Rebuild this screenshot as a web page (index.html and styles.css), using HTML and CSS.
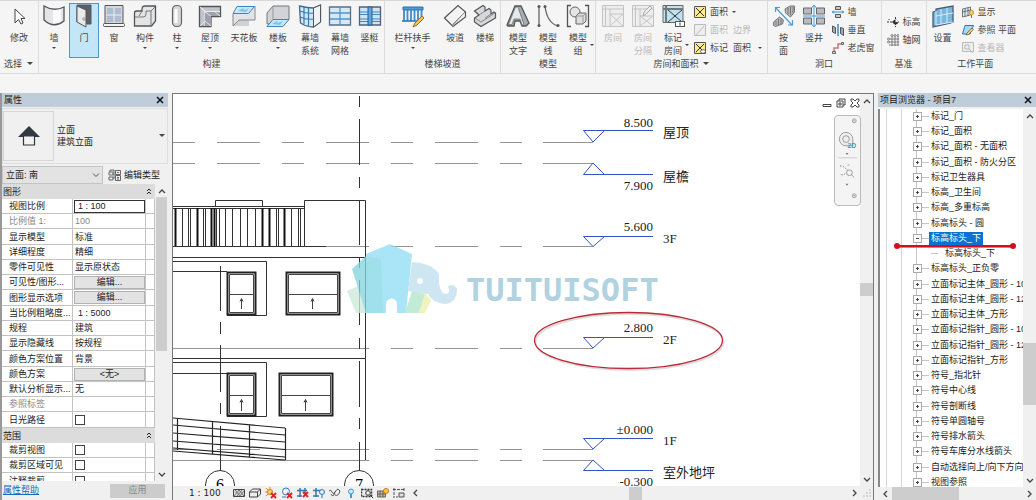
FILE: index.html
```html
<!DOCTYPE html>
<html lang="zh-CN">
<head>
<meta charset="utf-8">
<title>项目7</title>
<link rel="stylesheet" href="styles.css">
</head>
<body>
<div class="app">
<header class="ribbon">
  <section class="group">
    <div class="tools">
      <button class="tool w38"><svg class="ico" viewBox="0 0 24 24"><path d="M8 5v14l3.500-3.500 2.500 4.500 2-1-2-4.500h4z" fill="#fff" stroke="#444"/></svg>修改</button>
    </div>
    <button class="caption left">选择 <i class="down big"></i></button>
  </section>
  <section class="group">
    <div class="tools">
      <button class="tool w30"><svg class="ico" viewBox="0 0 24 24"><path d="M2 2q10 6 20 1v14q-10 8-20-1z" fill="#e4e5e8"/><path d="M11 5.500l8-1.500v14l-8 1.500z" fill="#fafafa"/><path d="M2 2q10 6 20 1v14q-10 8-20-1z" fill="none" stroke="#555" stroke-width="1.300"/></svg>墙<i class="down"></i></button>
      <button class="tool w30 active"><svg class="ico" viewBox="0 0 24 24"><path d="M5 18V1h14v19h-4" fill="#5c6066" stroke="#555"/><path d="M5 2l9 4v17l-9-5z" fill="#e9eaec" stroke="#555"/><circle cx="12" cy="15" r="1.200" fill="#fff" stroke="#555" stroke-width=".6"/></svg>门</button>
      <button class="tool w30"><svg class="ico" viewBox="0 0 24 24"><path d="M3 1.500h18v18H3z" fill="#d5d8dc" stroke="#555"/><path d="M5 4h14v14H5z" fill="#aebdcd"/><path d="M12 4v14M5 11h14" stroke="#eef2f6"/><rect x="1.500" y="19.500" width="21" height="3" rx="1" fill="#f5f5f5" stroke="#555"/></svg>窗</button>
      <button class="tool w32"><svg class="ico" viewBox="0 0 24 24"><path d="M1.500 12V9q0-2 2-2H9V5q0-3 3-3h10.500v15l-4 5h-17z" fill="#e2e4e6" stroke="#555" stroke-width="1.300"/><path d="M2 13h8q3 0 3-3V7h5v15M18 7l4-4M9 7L6 12" fill="none" stroke="#777"/></svg>构件<i class="down"></i></button>
      <button class="tool w32"><svg class="ico" viewBox="0 0 24 24"><rect x="7.500" y="1.500" width="9" height="21" rx="4" fill="#d4d6da" stroke="#666" stroke-width="1.200"/><path d="M11 5v14" stroke="#fff" stroke-width="3"/></svg>柱<i class="down"></i></button>
      <button class="tool w34"><svg class="ico" viewBox="0 0 24 24"><path d="M1.500 2.500h21v10H13v10H1.500z" fill="#c1c4cb" stroke="#555" stroke-width="1.300"/><path d="M2 3l5 4.500V22M2 3l5 4.500h15" fill="none" stroke="#eee"/><path d="M7 8h15v4h-9v10H7z" fill="#9ca1ab"/><path d="M7 8l6 4M2 22l5-5 6 5M17 8l5 4" fill="none" stroke="#e4e5e8"/></svg>屋顶<i class="down"></i></button>
      <button class="tool w34"><svg class="ico" viewBox="0 0 24 24"><path d="M1 10h6V2h16v12h-6v8H1z" fill="#ced1d5"/><path d="M1 10v12l6-6h16V2" fill="#e2e3e4" stroke="#888"/><path d="M5 2.500h17.500l-6 7H1z" fill="#c9e7f9" stroke="#3a86bd"/><path d="M6 7l5-3 1 2 5-2-3 4z" fill="#83c1e9"/></svg>天花板</button>
      <button class="tool w34"><svg class="ico" viewBox="0 0 24 24"><path d="M7 2h16v13l-6 5H1V9z" fill="#d1d3d8" stroke="#777"/><path d="M7 2v13" stroke="#999"/><path d="M7 15.500h16l-6 7H1z" fill="#c9e7f9" stroke="#3a86bd"/><path d="M6 20l5-3 1 2 5-2-3 4z" fill="#83c1e9"/></svg>楼板<i class="down"></i></button>
      <button class="tool w30"><svg class="ico" viewBox="0 0 24 24"><path d="M1.500 2q8 2 14 2l7-3v17l-7 5q-7 0-13-4z" fill="#d3e8f6" stroke="#46688a" stroke-width="1.300"/><path d="M15.500 4v19l7-5V1z" fill="#f1f2f4" stroke="#555"/><path d="M6 3v17M10.500 4v18M2 7q7 3 13.500 2M2 13q7 3 13.500 2" fill="none" stroke="#3978ad" stroke-width="1.200"/></svg>幕墙<br>系统</button>
      <button class="tool w30"><svg class="ico" viewBox="0 0 24 24"><path d="M1.500 3h21v18h-21z" fill="#d9e8f4" stroke="#5c6f82" stroke-width="1.300"/><path d="M2 9h20M2 15h20M12 3v18" stroke="#4d97ce" stroke-width="1.300"/></svg>幕墙<br>网格</button>
      <button class="tool w28"><svg class="ico" viewBox="0 0 24 24"><path d="M1.500 3h21v18h-21z" fill="#cfe4f4" stroke="#4b647c" stroke-width="1.300"/><path d="M2 8h20M2 10.500h20M2 15h20M2 17.500h20" stroke="#4787ba"/><path d="M10 3h4v18h-4z" fill="#5fa6dc" stroke="#275f91"/></svg>竖梃</button>
    </div>
    <div class="caption">构建</div>
  </section>
  <section class="group">
    <div class="tools">
      <button class="tool w56"><svg class="ico" viewBox="0 0 24 24"><path d="M2 3h20v3H2z" fill="#4f9bd6" stroke="#2b70aa"/><path d="M3 6v11M6.500 6v11M10 6v11M13.500 6v11M17 6v11M20.500 6v8" stroke="#3e8aca" stroke-width="1.800"/><path d="M1 17h18" stroke="#2b70aa" stroke-width="1.500"/><path d="M12 23l2-4 7-7 2 2-7 7z" fill="#f8c556" stroke="#9a6a20"/></svg>栏杆扶手<i class="down"></i></button>
      <button class="tool w30"><svg class="ico" viewBox="0 0 24 24"><path d="M1.500 14L15 1.500l7.500 6.500v5L10 22.500z" fill="#f3f3f4" stroke="#555" stroke-width="1.200"/><path d="M10 22.500V20L22 8" fill="#aaa" stroke="#888"/></svg>坡道</button>
      <button class="tool w30"><svg class="ico" viewBox="0 0 24 24"><path d="M1.500 7L10 1.500l2 1.500v4l4-2.500 2 1.500v4l3-2 1.500 1v5L8 22.500 1.500 18v-4L6 11z" fill="#d6d8dc" stroke="#555" stroke-width="1.200"/><path d="M6 11l6-4M2 14l6 4 14-9M12 14l6-4" fill="none" stroke="#888"/></svg>楼梯</button>
    </div>
    <div class="caption">楼梯坡道</div>
  </section>
  <section class="group pad">
    <div class="tools">
      <button class="tool w30"><svg class="ico" viewBox="0 0 24 24"><path d="M1 21L9 2h6l8 17-3 3h-4l-2-5H9l-1 5H2zM10 13h3l-2-6z" fill="#a6aab2" stroke="#555" stroke-width="1.300" fill-rule="evenodd"/><path d="M2.500 20.500L9.500 3H12l6 18h-2l-2-6H8l-2 5.500z" fill="#e6e7ea" stroke="#666" stroke-width=".7"/></svg>模型<br>文字</button>
      <button class="tool w30"><svg class="ico" viewBox="0 0 24 24"><path d="M3 2v20M9 2q2 17 13 20" fill="none" stroke="#666" stroke-width="1.300"/><g fill="#555"><circle cx="3" cy="2.500" r="1.500"/><circle cx="3" cy="21.500" r="1.500"/><circle cx="9" cy="2.500" r="1.500"/><circle cx="22" cy="21.500" r="1.500"/></g></svg>模型<br>线</button>
      <button class="tool w30 side"><svg class="ico" viewBox="0 0 24 24"><path d="M5 1.500H1.500v21H5M19 1.500h3.500v21H19" fill="none" stroke="#555" stroke-width="1.300"/><circle cx="9" cy="8" r="5" fill="#e4e5e8" stroke="#666"/><path d="M10 12l3-3h7v8l-3 3h-7z" fill="#ddd" stroke="#666"/><path d="M10 12h7l3-3M17 12v8" fill="none" stroke="#999"/></svg>模型<br>组<i class="down"></i></button>
    </div>
    <div class="caption">模型</div>
  </section>
  <section class="group pad">
    <div class="tools">
      <button class="tool w30 off"><svg class="ico" viewBox="0 0 24 24"><path d="M1.500 1.500h21v21h-21zM4.500 1.500v21M1.500 5h21M9 5v17M9 10h13M9 10l13 12M22 10L9 22" fill="#eee" stroke="#c4c4c4"/></svg>房间</button>
      <button class="tool w30 off"><svg class="ico" viewBox="0 0 24 24"><path d="M1.500 1.500h21v21h-21zM4.500 1.500v21M1.500 5h21M9 5v17M9 12h13M9 12l13 10M22 12L9 22" fill="#eee" stroke="#c4c4c4"/><path d="M12 12l1-4 6-6 2 2-6 6z" fill="#eee" stroke="#aaa"/></svg>房间<br>分隔</button>
      <button class="tool w30 side"><svg class="ico" viewBox="0 0 24 24"><path d="M2 1.500h20v17H2z" fill="#bfe2f3" stroke="#666"/><path d="M5 1.500v17M2 5h20" stroke="#777" stroke-width="2"/><path d="M7 6l14 12M21 6L7 18" stroke="#333"/><rect x="14.500" y="17.500" width="9" height="5" fill="#fff" stroke="#555"/><path d="M19 18.500v3" stroke="#333"/></svg>标记<br>房间<i class="down"></i></button>
      <div class="stack gap">
        <button class="mini"><svg viewBox="0 0 12 12"><path d="M.5.500h11v11H.5z" fill="#fbeb8a" stroke="#555"/><path d="M2 2l8 8M10 2l-8 8" stroke="#333"/></svg>面积<i class="down"></i></button>
        <button class="mini off"><svg viewBox="0 0 12 12"><path d="M.5.500h11v11H.5zM2 11l8-9" fill="#eee" stroke="#bbb"/></svg>面积&nbsp; 边界</button>
        <button class="mini"><svg viewBox="0 0 12 12"><path d="M.5.500h11v11H.5z" fill="#fbeb8a" stroke="#555"/><path d="M2 2l7 7M10 2l-8 8" stroke="#333"/><ellipse cx="9" cy="9.500" rx="2.500" ry="1.800" fill="#fff" stroke="#444" stroke-width=".7"/></svg>标记&nbsp; 面积&nbsp;<i class="down"></i></button>
      </div>
    </div>
    <button class="caption">房间和面积 <i class="down big"></i></button>
  </section>
  <section class="group">
    <div class="tools">
      <button class="tool w32"><svg class="ico" viewBox="0 0 24 24"><path d="M1.500 18l6-5 4 3-1 4-7 2.500-2-1zM13 5l5-3h4.500v6l-4 5-5-4z" fill="#b4b7bc" stroke="#777"/><path d="M4 17v4M6.500 15v6M9 15v5M16 4v6M18.500 3v8M21 3v6" stroke="#777"/><path d="M4 4l16 17M3.500 8V3.500H8M16 21h4.500v-5" fill="none" stroke="#4a9bd8" stroke-width="1.200"/></svg>按<br>面</button>
      <button class="tool w28"><svg class="ico" viewBox="0 0 24 24"><path d="M1.500 4h8v6h-8zM14.500 4h8v6h-8zM1.500 14h8v6h-8zM14.500 14h8v6h-8z" fill="#b8bbbf" stroke="#666"/><path d="M12 1v22M9.500 4L12 1l2.500 3M9.500 20l2.500 3 2.500-3M1 12h22" fill="none" stroke="#4a9bd8"/></svg>竖井</button>
      <div class="stack tight">
        <button class="mini"><svg viewBox="0 0 12 12"><path d="M3.500.500h5v3h-5zM3.500 8.500h5v3h-5z" fill="#ccc" stroke="#555"/><path d="M0 6h12M2 4.500L.5 6 2 7.500M10 4.500L11.500 6 10 7.500" fill="none" stroke="#398bc8"/></svg>墙</button>
        <button class="mini"><svg viewBox="0 0 12 12"><path d="M.5 2l3 1.500v6L.5 8zM8.500 3.500l3 1v7l-3-2z" fill="#aaa" stroke="#555"/><path d="M6 0v12" stroke="#398bc8" stroke-width="1.500"/></svg>垂直</button>
        <button class="mini"><svg viewBox="0 0 12 12"><path d="M2 10V6h4V2h5" fill="none" stroke="#c77970" stroke-width="1.500"/><path d="M.5 9.500h3v2h-3zM9.500.500h2v2h-2z" fill="#ddd" stroke="#666"/></svg>老虎窗</button>
      </div>
    </div>
    <div class="caption">洞口</div>
  </section>
  <section class="group">
    <div class="tools">
      <div class="stack datum">
        <button class="mini"><svg viewBox="0 0 12 12"><path d="M0 6h5M2 3v1M8.500 1v10M5 6h7" stroke="#333" stroke-dasharray="2 1"/><circle cx="8.500" cy="6" r="2.500" fill="#333"/><path d="M8.500 3.500A2.500 2.500 0 0 1 11 6H8.500z" fill="#fff"/></svg>标高</button>
        <button class="mini"><svg viewBox="0 0 12 12"><path d="M5 2v10M8 2v10M11 2v10M2 5h10M2 8h10M2 11h10" stroke="#666" stroke-width=".8"/><g fill="#fff" stroke="#555" stroke-width=".7"><circle cx="5" cy="1.500" r="1"/><circle cx="8" cy="1.500" r="1"/><circle cx="11" cy="1.500" r="1"/><circle cx="1.500" cy="5" r="1"/><circle cx="1.500" cy="8" r="1"/></g></svg>轴网</button>
      </div>
    </div>
    <div class="caption">基准</div>
  </section>
  <section class="group last">
    <div class="tools">
      <button class="tool w32"><svg class="ico" viewBox="0 0 24 24"><path d="M2 8l3-1V5l17-3v16l-3 1-17 4z" fill="#79b7df" stroke="#4a5d70" stroke-width="1.300"/><path d="M5 7v14l17-3M10 5v15M16 4v15M5 12l17-3" fill="none" stroke="#d7ecf9"/></svg>设置</button>
      <div class="stack tight">
        <button class="mini"><svg viewBox="0 0 12 12"><path d="M.5 3l8-2v8l-8 2zM3 2.500v8M6 2v8M.5 6l8-2" fill="#dceefa" stroke="#555" stroke-width=".8"/><circle cx="9.500" cy="6.500" r="2.200" fill="#fbd050" stroke="#a06a10" stroke-width=".6"/><path d="M9.500 9v3" stroke="#777"/></svg>显示</button>
        <button class="mini"><svg viewBox="0 0 12 12"><path d="M3 1.500h8.500L8 10H.5z" fill="#a8d6f3" stroke="#2878b0"/><path d="M4 11l1-2 5-5 1.500 1.500-5 5z" fill="#fbd050" stroke="#555" stroke-width=".7"/></svg>参照 平面</button>
        <button class="mini off"><svg viewBox="0 0 12 12"><path d="M.5.500h11v9H.5zM3 3h4v4H3zM7 7l4 4" fill="#eee" stroke="#bbb"/></svg>查看器</button>
      </div>
    </div>
    <div class="caption plane">工作平面</div>
  </section>
</header>

<main class="work">
  <aside class="props">
    <div class="bar"><h2>属性</h2><button class="close" aria-label="关闭"><svg viewBox="0 0 8 8"><path d="M1 1l6 6M7 1L1 7"/></svg></button></div>
    <button class="type">
      <span class="thumbnail"><svg viewBox="0 0 24 24"><path d="M6.500 11h11v10h-11z" fill="#f3f3f6" stroke="#333" stroke-width="1.200"/><path d="M1 13L12 2l11 11z" fill="#333942"/><path d="M7 13h10" stroke="#f3f3f6"/></svg></span>
      <span class="typename">立面<br>建筑立面</span><i class="down big"></i>
    </button>
    <div class="instance">
      <span class="combo"><select aria-label="实例"><option>立面: 南</option></select><svg viewBox="0 0 8 8"><path d="M1 2.500l3 3 3-3"/></svg></span>
      <button class="edittype"><svg viewBox="0 0 13 12"><path d="M1 3h4v3H1zM1 8h4v3H1zM2 3V1h4v9M7.500 1.500h5v4h-5zM7.500 6.500h5v5h-5zM9 3.500h2M9 8.500h2M9 10h2" fill="none" stroke="#555" stroke-width=".9"/></svg>编辑类型</button>
    </div>
    <div class="scrollrow">
      <div class="gridwrap">
      <table class="grid">
        <colgroup><col class="c1"><col><col class="c3"></colgroup>
        <tbody>
        <tr class="sec"><th colspan="2">图形</th><td><svg class="fold" viewBox="0 0 6 7"><path d="M1 3l2-2 2 2M1 6l2-2 2 2"/></svg></td></tr>
        <tr><th><label for="scale">视图比例</label></th><td><input id="scale" class="field" value="1 : 100"></td><td></td></tr>
        <tr class="dim"><th>比例值 1:</th><td>100</td><td></td></tr>
        <tr><th>显示模型</th><td>标准</td><td></td></tr>
        <tr><th>详细程度</th><td>精细</td><td></td></tr>
        <tr><th>零件可见性</th><td>显示原状态</td><td></td></tr>
        <tr><th>可见性/图形...</th><td><button class="cell">编辑...</button></td><td></td></tr>
        <tr><th>图形显示选项</th><td><button class="cell">编辑...</button></td><td></td></tr>
        <tr><th>当比例粗略度...</th><td class="in">1 : 5000</td><td></td></tr>
        <tr><th>规程</th><td>建筑</td><td></td></tr>
        <tr><th>显示隐藏线</th><td>按规程</td><td></td></tr>
        <tr><th>颜色方案位置</th><td>背景</td><td></td></tr>
        <tr><th>颜色方案</th><td><button class="cell">&lt;无&gt;</button></td><td></td></tr>
        <tr><th>默认分析显示...</th><td>无</td><td></td></tr>
        <tr class="dim"><th>参照标签</th><td></td><td></td></tr>
        <tr><th><label for="sun">日光路径</label></th><td><input id="sun" type="checkbox"></td><td></td></tr>
        <tr class="sec"><th colspan="2">范围</th><td><svg class="fold" viewBox="0 0 6 7"><path d="M1 3l2-2 2 2M1 6l2-2 2 2"/></svg></td></tr>
        <tr><th><label for="crop">裁剪视图</label></th><td><input id="crop" type="checkbox"></td><td></td></tr>
        <tr><th><label for="cropv">裁剪区域可见</label></th><td><input id="cropv" type="checkbox"></td><td></td></tr>
        <tr><th><label for="anno">注释裁剪</label></th><td><input id="anno" type="checkbox"></td><td></td></tr>
        </tbody>
      </table>
      </div>
      <div class="vscroll p"><button aria-label="向上"><svg viewBox="0 0 8 8"><path d="M1 6l3-3 3 3"/></svg></button><div class="track"><div class="thumb"></div></div><button aria-label="向下"><svg viewBox="0 0 8 8"><path d="M1 2l3 3 3-3"/></svg></button></div>
    </div>
    <div class="foot"><a href="#help">属性帮助</a><button disabled>应用</button></div>
  </aside>

  <section class="view">
    <div class="stage">
      <svg class="drawing" role="img" aria-label="南立面">
        <g transform="translate(-173 -94)">
          <g class="grey" stroke-dasharray="43 22 22 22">
            <path d="M108 142.500h436M108 163.500h436M108 246.500h436M108 348.500h436M108 449.500h436M108 460.500h436"/>
          </g>
          <path class="grey" d="M543 142.500h50M543 163.500h50M543 246.500h50M543 348.500h50M543 449.500h50M543 460.500h50M173 348.500h196M285 449.500h84M173 460.500h196"/>
          <path class="ln" d="M359.500 96v11M359.500 119v46M359.500 177v11M359.500 200v45M359.500 257v11M359.500 280v45M359.500 338v11M359.500 361v46M359.500 418v11M359.500 442v29M220.500 266v45M220.500 322v12M220.500 345v47M220.500 403v11M220.500 426v45"/>
          <path class="ln" d="M304.500 246V200.500H365.500V460M215.500 207V200.500H262.500V207M173 246.500H326M173 257.500H365M173 261.500H266.500V315.500H227M173 271.500H227M173 358.500H365M173 362.500H266.500V416.500H227M173 373.500H227"/>
          <path class="ln" d="M173 206.500h131M173 208.500h131" />
          <path d="M175.500 208v38M197.500 208v38M211.500 208v38M214.500 208v38M262.500 208v38M269.500 208v38M284.500 208v38" stroke="#111" stroke-width="2"/>
          <path class="ln" d="M182.500 208v38M188.500 208v38M190.500 208v38M203.500 208v38M205.500 208v38M216.500 208v38M219.500 208v38M225.500 208v38M232.500 208v38M240.500 208v38M247.500 208v38M255.500 208v38M276.500 208v38M278.500 208v38M291.500 208v38M298.500 208v38M300.500 208v38"/>
          <g class="win">
            <path d="M227.500 272.500h28v42h-28zM286.500 272.500h53v42h-53zM227.500 373.500h28v42h-28zM279.500 373.500h53v42h-53z"/>
            <path class="thin" d="M229.500 274.500h24v38h-24zM288.500 274.500h49v38h-49zM229.500 375.500h24v38h-24zM281.500 375.500h49v38h-49z"/>
            <path class="thin" d="M229 294.500h25M288 294.500h50M229 395.500h25M281 395.500h50"/>
            <path class="thin" d="M241.500 309v-10M240 301.500l1.500-3 1.500 3M312.500 309v-10M311 301.500l1.500-3 1.500 3M241.500 411v-11M240 402.500l1.500-3 1.500 3M305.500 411v-11M304 402.500l1.500-3 1.500 3"/>
          </g>
          <path d="M173 418l112 10M173 425l112 10M173 433l112 9M173 441l112 8.500M173 448l112 9M173 451l112 9M177.500 419v31M212.500 422v32M249.500 425v32M285.500 428v32" fill="none" stroke="#222" stroke-width="1.200"/>
          <g class="ln"><circle cx="220" cy="485" r="14.500"/><circle cx="359" cy="485" r="14.500"/></g>
          <text class="axis" x="220" y="490">6</text><text class="axis" x="359" y="490">7</text>

          <g class="level">
            <path d="M653 130.500H583.500L593 142l11.500-11.500M653 174.500H583.500L593 163l11.500 11.500M653 236.500H583.500L593 246.500l11.500-10M653 337.500H583.500L593 348l11.500-10.500M653 438.500H583.500L593 449l11.500-10.500M653 470.500H583.500L593 460l11.500 10.500"/>
          </g>
          <g class="num">
            <text x="653" y="127">8.500</text><text x="653" y="190">7.900</text><text x="653" y="231">5.600</text><text x="653" y="332">2.800</text><text x="653" y="434">±0.000</text><text x="653" y="486">-0.300</text>
          </g>
          <g class="name">
            <text x="663" y="137">屋顶</text><text x="663" y="181">屋檐</text><text x="663" y="243">3F</text><text x="663" y="344">2F</text><text x="663" y="445">1F</text><text x="663" y="477">室外地坪</text>
          </g>
          <ellipse cx="629.500" cy="342" rx="94" ry="28" fill="none" stroke="#e0dcdc" stroke-width="2"/>
          <ellipse cx="628.500" cy="340.500" rx="94" ry="28" fill="none" stroke="#b92b38" stroke-width="1.300"/>

          <g opacity=".78">
            <path d="M347 291l11-5 11 27h-13z" fill="#cfeadb"/>
            <path d="M352 269l14-13 20 57h-20z" fill="#86d5df"/>
            <path d="M366 254l24-10 22 10-6 59h-9v-9a5.500 5.500 0 0 0-11 0v9h-20z" fill="#92def5"/>
            <path d="M366 256l15 3 2 54h-17z" fill="#86d8e6"/>
            <path d="M412 262q20 1 27 12-1 19 7 20 5-1 2-8l5-1 4 3q0 15-12 16-12-1-17-10l-20-3z" fill="#bfe0ee"/>
            <path d="M412 291l14 3-7 19h-14z" fill="#b0e5cd"/><path d="M425 293l6 7-6 13h-6z" fill="#eef0ac"/>
            <circle cx="420" cy="281" r="3" fill="#fff"/>
            <text class="mark" x="466" y="301">TUITUISOFT</text>
          </g>
        </g>
      </svg>
      <div class="winbtns">
        <button aria-label="最小化"><svg viewBox="0 0 10 10"><path d="M1 6.500h8v2H1z"/></svg></button>
        <button aria-label="还原"><svg viewBox="0 0 10 10"><path d="M1 3h6v6H1zM3 3V1h6v6H7M3 5h2v2H3z"/></svg></button>
        <button aria-label="关闭视图"><svg viewBox="0 0 10 10"><path d="M1 1h2l2 2 2-2h2v2L7 5l2 2v2H7L5 7 3 9H1V7l2-2-2-2z"/></svg></button>
      </div>
      <div class="nav">
        <svg viewBox="0 0 26 90"><g fill="none" stroke="#9a9a9a"><circle cx="20" cy="5" r="2"/><path d="M19 5h2"/><path d="M11.500 17a7 7 0 1 0 0 14h7v-7a7 7 0 0 0-7-7z" fill="#eee"/><circle cx="11.500" cy="24" r="3.500"/><path d="M3 43.500h20" stroke="#ccc"/><path d="M8 52l6 5-6 5M6 51v2M6 61h2M13 51h3" stroke-dasharray="2 1"/><circle cx="15" cy="59" r="3" fill="#f4f4f4"/><path d="M17 61l3 3"/><circle cx="20" cy="83" r="2"/><path d="M19 83h2"/></g><path d="M11 38.500h3l-1.500 2zM11 70.500h3l-1.500 2z" fill="#777"/><text x="13" y="33">2D</text></svg>
      </div>
      <div class="vscroll v"><button aria-label="向上"><svg viewBox="0 0 8 8"><path d="M1 6l3-3 3 3"/></svg></button><div class="track"><div class="thumb"></div></div><button aria-label="向下"><svg viewBox="0 0 8 8"><path d="M1 2l3 3 3-3"/></svg></button></div>
    </div>
    <div class="status">
      <span class="ratio">1 : 100</span>
      <span class="icons">
        <svg viewBox="0 0 12 12"><path d="M.5 2.500h11v7H.5z" fill="#ddd" stroke="#444"/><path d="M1 9l5-6M4 9l5-6M7 9l4-5M2 3l5 6M6 3l5 6" stroke="#555" stroke-width=".8"/></svg>
        <svg viewBox="0 0 12 12"><path d="M.5 5l3-3h8v5l-3 3h-8zM.5 5h8l3-3M8.500 5v5" fill="#eee" stroke="#444"/></svg>
        <svg viewBox="0 0 12 12"><circle cx="5" cy="5" r="2.500" fill="#ffd65c" stroke="#c47a12"/><path d="M5 0v2M0 5h2M1 1l2 2M1 9l2-2" stroke="#d98820"/><path d="M6 6l5 5M11 6l-5 5" stroke="#d82424" stroke-width="1.800"/></svg>
        <svg viewBox="0 0 12 12"><circle cx="5" cy="4.500" r="3.500" fill="#eaf5fd" stroke="#3478ad"/><path d="M1 10h4" stroke="#3478ad"/><path d="M6 6l5 5M11 6l-5 5" stroke="#d82424" stroke-width="1.800"/></svg>
        <svg viewBox="0 0 12 12"><path d="M0 3.500h10M3 1v9M8 1v5M0 9h5" fill="none" stroke="#3478ad" stroke-width="1.500"/><path d="M6 5l5 5M11 5l-5 5" stroke="#d82424" stroke-width="1.800"/></svg>
        <svg viewBox="0 0 12 12"><path d="M0 3.500h8M3 1v9M0 9h6" fill="none" stroke="#3478ad" stroke-width="1.500"/><circle cx="9" cy="5" r="2.500" fill="#d9effc" stroke="#3478ad"/><path d="M9 8v3" stroke="#3478ad"/></svg>
        <svg viewBox="0 0 12 12"><path d="M0 4q2-2 3 1t3 0 3-3l2 2M2 7q1 3 3 1l1-3M6 8q3 2 5-4" fill="none" stroke="#555"/></svg>
        <svg viewBox="0 0 12 12"><circle cx="6" cy="4.500" r="2.500" fill="#c9eafa" stroke="#3b9bd2"/><path d="M6 7v4" stroke="#3b9bd2" stroke-width="2"/></svg>
        <svg viewBox="0 0 12 12"><path d="M.5 2.500h10v7H.5z" fill="none" stroke="#333" stroke-width="1.500" stroke-dasharray="2 1"/><circle cx="7" cy="6" r="2.300" fill="#eee" stroke="#333"/><path d="M9 8l3 3" stroke="#333"/></svg>
        <svg viewBox="0 0 12 12"><path d="M.5 4h8v6h-8zM3 4v6M6 4v6M.5 7h8" fill="#c9bab0" stroke="#665"/><circle cx="9" cy="4" r="2.500" fill="#ffc842" stroke="#c47a12"/></svg>
        <svg viewBox="0 0 12 12"><path d="M0 2.500h11M1 1v10M11 1v3M3 10h2" fill="none" stroke="#555" stroke-dasharray="3 1"/><path d="M6 6h5v4H6z" fill="#ddd" stroke="#555"/></svg>
      </span>
      <div class="hscroll"><button aria-label="向左"><svg viewBox="0 0 8 8"><path d="M6 1L3 4l3 3"/></svg></button><div class="track"><div class="thumb"></div></div><button aria-label="向右"><svg viewBox="0 0 8 8"><path d="M2 1l3 3-3 3"/></svg></button></div>
      <svg class="grip" viewBox="0 0 8 8"><path d="M7 0v8M4 3v5M1 6v2" stroke="#bbb" stroke-dasharray="2 1"/></svg>
    </div>
  </section>

  <aside class="browser">
    <div class="bar"><h2>项目浏览器 - 项目7</h2><button class="close" aria-label="关闭"><svg viewBox="0 0 8 8"><path d="M1 1l6 6M7 1L1 7"/></svg></button></div>
    <div class="treerow">
      <ul class="tree">
        <li><span>标记_门</span></li>
        <li><span>标记_面积</span></li>
        <li><span>标记_面积 - 无面积</span></li>
        <li><span>标记_面积 - 防火分区</span></li>
        <li><span>标记卫生器具</span></li>
        <li><span>标高_卫生间</span></li>
        <li><span>标高_多重标高</span></li>
        <li><span>标高标头 - 圆</span></li>
        <li class="open"><span class="sel">标高标头_下</span><svg class="underline" viewBox="0 0 122 8"><path d="M3 5h116" stroke="#999" stroke-width="2"/><path d="M3 4h116" stroke="#d0101c" stroke-width="2"/><circle cx="3" cy="4" r="3" fill="#d0101c"/><circle cx="119" cy="4" r="3" fill="#d0101c"/></svg></li>
        <li class="child"><span>标高标头_下</span></li>
        <li><span>标高标头_正负零</span></li>
        <li><span>立面标记主体_圆形 - 10</span></li>
        <li><span>立面标记主体_圆形 - 12</span></li>
        <li><span>立面标记主体_方形</span></li>
        <li><span>立面标记指针_圆形 - 10</span></li>
        <li><span>立面标记指针_圆形 - 12</span></li>
        <li><span>立面标记指针_方形</span></li>
        <li><span>符号_指北针</span></li>
        <li><span>符号中心线</span></li>
        <li><span>符号剖断线</span></li>
        <li><span>符号单圆轴号</span></li>
        <li><span>符号排水箭头</span></li>
        <li><span>符号车库分水线箭头</span></li>
        <li><span>自动选择向上/向下方向</span></li>
        <li><span>视图参照</span></li>
      </ul>
      <div class="vscroll t"><button aria-label="向上"><svg viewBox="0 0 8 8"><path d="M1 6l3-3 3 3"/></svg></button><div class="track"><div class="thumb"></div></div><button aria-label="向下"><svg viewBox="0 0 8 8"><path d="M1 2l3 3 3-3"/></svg></button></div>
    </div>
    <div class="hscroll b"><button aria-label="向左"><svg viewBox="0 0 8 8"><path d="M6 1L3 4l3 3"/></svg></button><div class="track"><div class="thumb"></div></div><button aria-label="向右"><svg viewBox="0 0 8 8"><path d="M2 1l3 3-3 3"/></svg></button></div>
  </aside>
</main>
</div>
</body>
</html>
```
FILE: styles.css
```css
* { box-sizing: border-box; }
body { margin: 0; font: 9px/13px "Liberation Sans", "Noto Sans CJK SC", sans-serif; color: #222; background: #f5f5f5; }
button, input, select { font: inherit; color: inherit; margin: 0; padding: 0; border: 0; background: none; }
h2 { margin: 0; font-size: 9px; font-weight: normal; }
svg { display: block; flex: none; }
.app { display: flex; flex-direction: column; height: 100vh; overflow: hidden; }

/* ribbon */
.ribbon { display: flex; flex: none; height: 74px; margin-bottom: 19px; border-top: 1px solid #d8d8d8; border-bottom: 1px solid #d9d9d9; background: #f5f5f6; color: #444; }
.group { display: flex; flex-direction: column; border-right: 1px solid #dcdcdc; }
.group.pad { padding: 0 2px; }
.group.last { flex: 1; border-right: 0; }
.tools { display: flex; flex: 1; }
.tool { position: relative; display: flex; flex-direction: column; align-items: center; height: 55px; margin-top: 2px; padding-top: 1px; text-align: center; white-space: nowrap; line-height: 13px; }
.ico { width: 24px; height: 24px; margin-bottom: 4px; }
.w28 { width: 29px; } .w30 { width: 30px; } .w32 { width: 32px; } .w34 { width: 34px; } .w38 { width: 38px; } .w56 { width: 55px; }
.active { border: 1px solid #4a96c4; padding-top: 0; background: #c2e6f7; }
.off { color: #b9b9b9; }
.down { display: inline-block; flex: none; width: 0; height: 0; margin: 2px 0 0; border: 2px solid transparent; border-top-color: #444; border-bottom: 0; }
.down.big { margin: 0 0 2px 2px; border-width: 3px; border-bottom: 0; }
.side .down { position: absolute; right: -1px; top: 39px; }
.stack { display: flex; flex-direction: column; padding-top: 2px; }
.stack.gap { padding-left: 6px; padding-right: 3px; }
.stack.tight { padding-left: 3px; padding-right: 6px; }
.stack.datum { padding: 12px 5px 0; }
.mini { display: flex; align-items: center; gap: 4px; height: 18px; white-space: nowrap; }
.mini svg { width: 12px; height: 12px; }
.mini .down { margin: 0; }
.caption { height: 15px; padding-bottom: 2px; text-align: center; line-height: 13px; }
.caption.left { padding-left: 4px; text-align: left; }
.caption.plane { padding-right: 12px; }

/* work area */
.work { display: flex; flex: 1; min-height: 0; gap: 4px; background: #f0f0f0; }
.bar { display: flex; flex: none; align-items: center; justify-content: space-between; height: 14px; padding: 0 4px 0 2px; background: #bfcddb; }
.close svg { width: 8px; height: 8px; fill: none; stroke: #111; stroke-width: 1.500; }

.props { display: flex; flex: none; flex-direction: column; width: 168px; border-left: 2px solid #999; background: #f0f0f0; }
.type { display: flex; flex: none; align-items: center; height: 56px; margin: 1px 0 2px; padding-right: 2px; border: 1px solid #dedede; text-align: left; }
.thumbnail { display: grid; place-items: center; width: 51px; height: 50px; border: 1px solid #d6d6d6; }
.thumbnail svg { width: 24px; height: 24px; }
.typename { flex: 1; padding-left: 3px; line-height: 12px; }
.instance { display: flex; flex: none; height: 18px; margin-bottom: 0; }
.combo { position: relative; width: 101px; }
.combo select { appearance: none; width: 100%; height: 100%; padding-left: 3px; border: 1px solid #c4c4c4; background: #e3e3e3; }
.combo svg { position: absolute; right: 3px; top: 5px; width: 8px; height: 8px; fill: none; stroke: #555; pointer-events: none; }
.edittype { display: flex; flex: 1; align-items: center; gap: 3px; padding-left: 5px; white-space: nowrap; }
.edittype svg { width: 13px; height: 12px; }
.scrollrow, .treerow { display: flex; flex: 1; min-height: 0; }
.gridwrap { flex: 1; overflow: hidden; background: #fff; }
.grid { width: 100%; table-layout: fixed; border-collapse: separate; border-spacing: 0; }
.c1 { width: 71px; } .c3 { width: 9px; }
.grid tr { height: 15px; }
.grid tr:nth-child(4n) { height: 16px; }
.grid th, .grid td { height: inherit; padding: 0 0 0 2px; border-right: 1px solid #c3c3c3; border-bottom: 1px solid #c3c3c3; font-weight: normal; text-align: left; line-height: 12px; white-space: nowrap; overflow: hidden; }
.grid th { padding-left: 7px; }
.grid td.in { padding-left: 5px; }
.grid td:last-child { padding: 0; }
.grid .sec th, .grid .sec td { padding-left: 1px; border: 0; background: #dcdcdc; }
.dim { color: #888; }
.fold { width: 6px; height: 7px; fill: none; stroke: #222; margin-left: -1px; }
.field { display: block; width: 100%; height: 13px; padding-left: 3px; border: 1px solid #333; }
.grid td:has(.field), .grid td:has(.cell) { padding: 0 0 0 1px; }
.cell { display: block; width: 100%; height: 13px; border: 1px solid #b2b2b2; background: #e3e3e3; line-height: 11px; }
input[type="checkbox"] { display: block; appearance: none; width: 10px; height: 10px; border: 1px solid #444; background: #fff; }
.foot { display: flex; flex: none; align-items: center; justify-content: space-between; height: 19px; padding: 0 3px 0 1px; }
.foot a { color: #1967b8; }
.foot button { width: 55px; height: 14px; background: #ccc; color: #888; }

/* scroll bars */
.vscroll { display: flex; flex: none; flex-direction: column; width: 13px; background: #f0f0f0; }
.vscroll button, .hscroll button { display: grid; place-items: center; flex: none; width: 13px; height: 13px; }
.vscroll button svg, .hscroll button svg { width: 8px; height: 8px; fill: none; stroke: #444; stroke-width: 1.300; }
.track { flex: 1; min-width: 0; min-height: 0; }
.thumb { background: #cdcdcd; }
.p .thumb { height: 57%; margin: 0 1px; }
.v .track, .t .track { display: flex; flex-direction: column; }
.v .track::before { content: ""; flex: 176; }
.v .track::after { content: ""; flex: 177; }
.v .thumb { height: 13px; }
.t .track::before { content: ""; flex: 220; }
.t .track::after { content: ""; flex: 69; }
.t .thumb { height: 62px; }
.hscroll { display: flex; flex: 1; height: 13px; background: #f0f0f0; }
.hscroll .track { display: flex; }
.hscroll .track::before { content: ""; flex: 207; }
.hscroll .track::after { content: ""; flex: 206; }
.hscroll .thumb { width: 13px; }

/* drawing view */
.view { display: flex; flex: 1; flex-direction: column; min-width: 0; border: 1px solid #777; border-bottom: 0; background: #fff; }
.stage { position: relative; display: flex; flex: 1; min-height: 0; }
.drawing { flex: 1; min-width: 0; height: 100%; overflow: hidden; }
.ln { fill: none; stroke: #333; }
.grey { fill: none; stroke: #949494; }
.win { fill: none; stroke: #222; stroke-width: 2; }
.win .thin { stroke-width: 1; stroke: #444; }
.level { fill: none; stroke: #3452c4; }
.num { font: 13px "Liberation Serif", serif; text-anchor: end; fill: #222; }
.name { font: 13px "Liberation Serif", "Noto Sans CJK SC", serif; fill: #222; }
.axis { font: 16px "Liberation Serif", serif; text-anchor: middle; }
.mark { font: bold 32px "DejaVu Sans Mono", monospace; fill: #9cc6d8; }
.winbtns { position: absolute; right: 13px; top: 4px; display: flex; gap: 4px; }
.winbtns svg { width: 10px; height: 10px; fill: #fff; stroke: #444; }
.nav { position: absolute; right: 12px; top: 21px; width: 27px; height: 91px; border: 1px solid #bbb; border-radius: 4px; background: #f4f4f4; }
.nav text { font: bold 7px "Liberation Sans", sans-serif; fill: #4f92c2; }
.status { display: flex; flex: none; align-items: center; height: 14px; background: #f0f0f0; }
.ratio { width: 60px; padding-left: 16px; font-family: "DejaVu Sans", sans-serif; font-size: 9px; white-space: nowrap; }
.icons { display: flex; gap: 4px; padding-right: 3px; }
.icons svg { width: 12px; height: 12px; }
.grip { width: 8px; height: 8px; margin: 0 2px; }

/* project browser */
.browser { display: flex; flex: none; flex-direction: column; width: 158px; }
.browser .bar { margin-bottom: 2px; }
.treerow { border-left: 2px solid #888; background: #fff; }
.tree { flex: 1; min-width: 0; margin: 0; padding: 0; list-style: none; background: linear-gradient(#d5d5d5, #d5d5d5) 6px 0 / 1px 100% no-repeat, linear-gradient(#d5d5d5, #d5d5d5) 21px 0 / 1px 100% no-repeat, linear-gradient(#c5c5c5, #c5c5c5) 36px 0 / 1px 100% no-repeat; }
.tree li { position: relative; display: flex; align-items: center; height: 15px; padding-left: 33px; white-space: nowrap; }
.tree li:nth-child(4n) { height: 16px; }
.tree li::before { content: ""; flex: none; width: 7px; height: 7px; border: 1px solid #aaa; background: linear-gradient(#445, #445) center / 3px 1px no-repeat, linear-gradient(#445, #445) center / 1px 3px no-repeat, #fff; }
.tree li::after { content: ""; order: 1; flex: none; width: 7px; height: 1px; background: #c5c5c5; }
.tree span { order: 2; flex: 1; min-width: 0; overflow: hidden; padding-left: 3px; }
.tree li:not(.child) span { padding-left: 2px; }
.tree .open::before { background: linear-gradient(#445, #445) center / 3px 1px no-repeat, #fff; }
.tree .open .sel { flex: none; padding: 0 2px; background: #0b72d0; color: #fff; }
.tree .child { padding-left: 51px; }
.tree .child::before { display: none; }
.tree .child span { padding-left: 7px; }
.underline { position: absolute; z-index: 1; left: 14px; top: 11px; width: 122px; height: 8px; }
.hscroll.b { flex: none; height: 13px; }
.b .track::before { flex: 1; }
.b .thumb { flex: 66; }
.b .track::after { flex: 64; }
```
